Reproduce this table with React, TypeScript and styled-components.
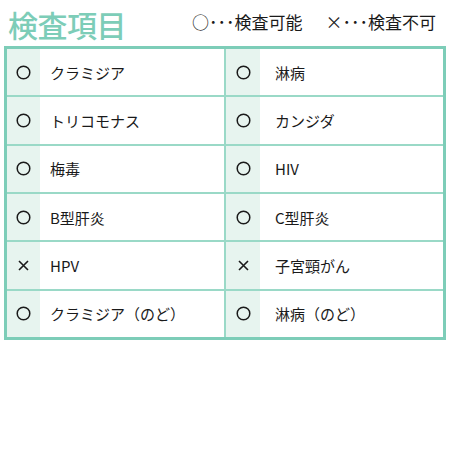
import React from "react";
import styled, { createGlobalStyle } from "styled-components";

const Global = createGlobalStyle`
  html, body { margin: 0; padding: 0; background: #fff; }
  body { font-family: "Noto Sans CJK JP", "Noto Sans", sans-serif; color: #1a1a1a; }
`;

const Page = styled.div`
  width: 450px;
  padding: 4px 4px 0 4px;
  box-sizing: border-box;
`;

const Header = styled.div`
  display: flex;
  align-items: center;
  justify-content: space-between;
  height: 40px;
  margin-bottom: 2px;
`;

const Title = styled.h1`
  margin: 0 0 0 4px;
  font-size: 30px;
  font-weight: 500;
  color: #7dcdb8;
  line-height: 40px;
  letter-spacing: -0.5px;
`;

const Legend = styled.div`
  display: flex;
  gap: 23px;
  font-size: 17px;
  line-height: 22px;
  margin-right: 10px;
  margin-top: -4px;
`;

const Table = styled.div`
  display: grid;
  grid-template-columns: 1fr 1fr;
  grid-template-rows: repeat(6, 1fr);
  height: 294px;
  box-sizing: border-box;
  gap: 2px;
  background: #9ad9c7;
  border: 3px solid #7dcdb8;
`;

const Cell = styled.div`
  display: flex;
  background: #fff;
`;

const Mark = styled.div<{ $right?: boolean }>`
  width: ${(p) => (p.$right ? 34 : 33)}px;
  flex: none;
  background: #e7f4ef;
  display: flex;
  align-items: center;
  justify-content: center;
`;

const Label = styled.div<{ $right?: boolean }>`
  display: flex;
  align-items: center;
  padding-left: ${(p) => (p.$right ? 15 : 10)}px;
  font-size: 15px;
`;

const Circle = () => (
  <svg width="15" height="15" viewBox="0 0 15 15">
    <circle cx="7.5" cy="7.5" r="6.3" fill="none" stroke="#1a1a1a" strokeWidth="1.5" />
  </svg>
);

const Cross = () => (
  <svg width="13" height="13" viewBox="0 0 13 13">
    <path d="M2 2 L11 11 M11 2 L2 11" stroke="#1a1a1a" strokeWidth="1.6" />
  </svg>
);

const items: [boolean, string][] = [
  [true, "クラミジア"],
  [true, "淋病"],
  [true, "トリコモナス"],
  [true, "カンジダ"],
  [true, "梅毒"],
  [true, "HIV"],
  [true, "B型肝炎"],
  [true, "C型肝炎"],
  [false, "HPV"],
  [false, "子宮頸がん"],
  [true, "クラミジア（のど）"],
  [true, "淋病（のど）"],
];

export default function App() {
  return (
    <Page>
      <Global />
      <Header>
        <Title>検査項目</Title>
        <Legend>
          <span>○･･･検査可能</span>
          <span>×･･･検査不可</span>
        </Legend>
      </Header>
      <Table>
        {items.map(([ok, label], i) => {
          const right = i % 2 === 1;
          return (
            <Cell key={i}>
              <Mark $right={right}>{ok ? <Circle /> : <Cross />}</Mark>
              <Label $right={right}>{label}</Label>
            </Cell>
          );
        })}
      </Table>
    </Page>
  );
}
